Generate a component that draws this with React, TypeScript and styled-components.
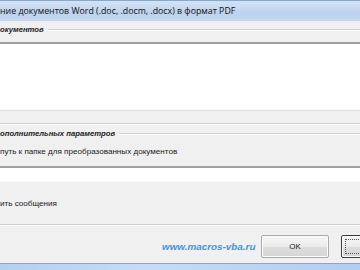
import React from "react";
import styled, { createGlobalStyle } from "styled-components";

const Global = createGlobalStyle`
  html, body { margin: 0; padding: 0; background: #f0f0f0; }
  body { width: 360px; height: 270px; overflow: hidden; }
  #root { width: 360px; height: 270px; }
`;

const Window = styled.div`
  width: 360px;
  height: 270px;
  display: flex;
  flex-direction: column;
  overflow: hidden;
  font-family: "Liberation Sans", Arial, sans-serif;
`;

const TitleBar = styled.div`
  height: 21px;
  flex: none;
  box-sizing: border-box;
  border-top: 1px solid #8aa8c9;
  background: linear-gradient(#d3e3f4, #bcd3ee 60%, #c3d8f0);
  display: flex;
  align-items: center;
`;

const TitleText = styled.span`
  font-family: "Open Sans", "Noto Sans", sans-serif;
  font-size: 8.8px;
  color: #111;
  white-space: nowrap;
  margin-top: -1px;
`;

const Body = styled.div`
  flex: 1;
  background: #f0f0f0;
  display: flex;
  flex-direction: column;
`;

const FrameHeader = styled.div<{ $top: number }>`
  display: flex;
  align-items: center;
  gap: 4px;
  height: 9px;
  margin-top: ${(p) => p.$top}px;
`;

const FrameLabel = styled.span`
  font-size: 7.7px;
  font-weight: bold;
  font-style: italic;
  color: #1a1a1a;
  white-space: nowrap;
`;

const Groove = styled.div`
  flex: 1;
  height: 0;
  border-top: 1px solid #d0d0d0;
  border-bottom: 1px solid #ffffff;
`;

const FullGroove = styled(Groove)<{ $top: number }>`
  flex: none;
  margin-top: ${(p) => p.$top}px;
`;

const ListBox = styled.div`
  margin-top: 8px;
  height: 65px;
  background: #ffffff;
  border-top: 2px solid #a0a0a0;
  border-bottom: 1px solid #f8f8f8;
  margin-right: -10px;
  box-shadow: 0 1px 0 #e3e3e3;
`;

const Caption = styled.div<{ $top: number }>`
  margin-top: ${(p) => p.$top}px;
  font-size: 8.1px;
  line-height: 9px;
  color: #1a1a1a;
  white-space: nowrap;
`;

const TextBox = styled.div`
  margin-top: 10px;
  height: 13px;
  background: #ffffff;
  border-top: 2px solid #a0a0a0;
  border-bottom: 1px solid #f8f8f8;
  margin-right: -10px;
`;

const Footer = styled.div`
  display: flex;
  align-items: center;
  margin-top: 9px;
  height: 23px;
  padding-left: 162px;
`;

const Link = styled.span`
  flex: none;
  font-size: 9.9px;
  font-weight: bold;
  font-style: italic;
  color: #4a90d9;
  white-space: nowrap;
  width: 99px;
`;

const Button = styled.div<{ $default?: boolean }>`
  flex: none;
  box-sizing: border-box;
  width: 68px;
  height: 23px;
  display: flex;
  align-items: center;
  justify-content: center;
  font-size: 8px;
  color: #222;
  border: 1px solid ${(p) => (p.$default ? "#3c3c3c" : "#aaaaaa")};
  border-radius: 2px;
  background: linear-gradient(#f6f6f6, #ebebeb 50%, #dddddd 51%, #d6d6d6);
  box-shadow: inset 0 0 0 1px #fcfcfc;
  margin-right: 12px;
`;

const Focus = styled.div`
  position: absolute;
  inset: 3px;
  border: 1px dotted #555;
`;

const DefaultButton = styled(Button)`
  position: relative;
  width: 70px;
`;

const BottomFrame = styled.div`
  height: 6px;
  flex: none;
  border-top: 1px solid #8ea6c0;
  background: linear-gradient(90deg, #b5cfee, #c7dcf3 40%, #b3cdee);
`;

export default function App() {
  return (
    <>
      <Global />
      <Window>
        <TitleBar>
          <TitleText>ние документов Word (.doc, .docm, .docx) в формат PDF</TitleText>
        </TitleBar>
        <Body>
          <FrameHeader $top={4}>
            <FrameLabel>окументов</FrameLabel>
            <Groove />
          </FrameHeader>
          <ListBox />
          <FullGroove $top={13} />
          <FrameHeader $top={4}>
            <FrameLabel>ополнительных параметров</FrameLabel>
            <Groove />
          </FrameHeader>
          <Caption $top={9}>путь к папке для преобразованных документов</Caption>
          <TextBox />
          <Caption $top={17}>ить сообщения</Caption>
          <FullGroove $top={16} />
          <Footer>
            <Link>www.macros-vba.ru</Link>
            <Button>OK</Button>
            <DefaultButton $default>
              <Focus />
            </DefaultButton>
          </Footer>
        </Body>
        <BottomFrame />
      </Window>
    </>
  );
}
